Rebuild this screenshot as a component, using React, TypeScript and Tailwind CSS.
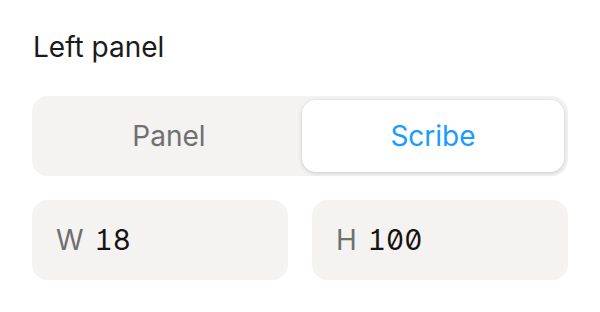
import React from "react";

function SizeField({ label, value }: { label: string; value: string }) {
  return (
    <div className="flex-1 h-20 rounded-2xl bg-[#f4f3f1] flex items-center gap-[11px] px-6 text-[28px] leading-none">
      <span className="text-[#6f6f6f]">{label}</span>
      <span className="text-[#141414] [font-feature-settings:'cv01','tnum','zero']">{value}</span>
    </div>
  );
}

export default function App() {
  return (
    <div className="w-[600px] h-[312px] bg-white px-8 pt-[31px] font-[Inter,'Noto_Sans',sans-serif]">
      <div className="text-[28px] leading-[32px] text-[#1a1a1a] pl-px">Left panel</div>
      <div className="mt-[33px] h-20 rounded-2xl bg-[#f4f3f1] p-1 flex">
        <div className="flex-1 flex items-center justify-center text-[28px] text-[#707070]">Panel</div>
        <div className="w-[262px] flex items-center justify-center rounded-[14px] bg-white text-[28px] text-[#1a9bff] shadow-[0_1px_4px_rgba(0,0,0,0.18)]">
          Scribe
        </div>
      </div>
      <div className="mt-6 flex gap-6">
        <SizeField label="W" value="18" />
        <SizeField label="H" value="100" />
      </div>
    </div>
  );
}
